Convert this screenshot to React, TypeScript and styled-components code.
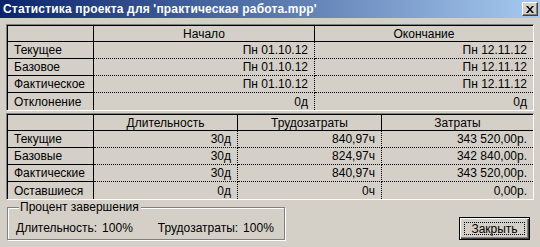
import React from "react";
import styled, { createGlobalStyle } from "styled-components";

const Global = createGlobalStyle`
  html, body { margin: 0; padding: 0; background: #d4d0c8; }
  body { font-family: "Liberation Sans", Arial, sans-serif; font-size: 12px; color: #000; }
  * { box-sizing: border-box; }
`;

const Window = styled.div`
  width: 540px;
  height: 247px;
  display: flex;
  flex-direction: column;
  background: #d4d0c8;
  overflow: hidden;
`;

const TitleBar = styled.div`
  height: 18px;
  flex: none;
  display: flex;
  align-items: center;
  justify-content: space-between;
  padding: 0 2px 0 3px;
  background: linear-gradient(to right, #0a246a, #a6caf0);
`;

const TitleText = styled.span`
  color: #fff;
  font-weight: bold;
  font-size: 12px;
  white-space: nowrap;
  letter-spacing: 0.17px;
`;

const CloseButton = styled.div`
  width: 16px;
  height: 14px;
  background: #d4d0c8;
  border: 1px solid;
  border-color: #fff #404040 #404040 #fff;
  box-shadow: inset -1px -1px 0 #808080;
  display: flex;
  align-items: center;
  justify-content: center;
`;

const Body = styled.div`
  flex: 1;
  display: flex;
  flex-direction: column;
  padding: 6px 6px 7px 6px;
`;

const Frame = styled.div<{ $mt?: number }>`
  border: 1px solid;
  border-color: #808080 #fff #fff #808080;
  margin-top: ${(p) => p.$mt ?? 0}px;
`;

const Grid = styled.div<{ $cols: string }>`
  display: grid;
  grid-template-columns: ${(p) => p.$cols};
  grid-template-rows: 16px;
  grid-auto-rows: 17px;
  border-top: 1px solid #000;
  border-left: 1px solid #000;
`;

type Kind = "head" | "label" | "data";

const Cell = styled.div<{ $kind: Kind; $lastCol?: boolean; $lastRow?: boolean }>`
  display: flex;
  align-items: center;
  white-space: nowrap;
  overflow: hidden;
  justify-content: ${(p) => (p.$kind === "head" ? "center" : p.$kind === "label" ? "flex-start" : "flex-end")};
  padding: ${(p) => (p.$kind === "label" ? "0 0 0 6px" : p.$kind === "data" ? "0 6px 0 0" : "0")};
  border-right: ${(p) =>
    p.$lastCol ? "none" : p.$kind === "data" ? "1px dotted #000" : "1px solid #000"};
  border-bottom: ${(p) =>
    p.$lastRow ? "none" : p.$kind === "data" ? "1px dotted #000" : "1px solid #000"};
`;

const BottomRow = styled.div`
  margin-top: auto;
  display: flex;
  justify-content: space-between;
  align-items: flex-end;
  padding: 0 4px 0 1px;
`;

const Group = styled.fieldset`
  margin: 0;
  width: 278px;
  height: 40px;
  padding: 2px 0 0 8px;
  border: 1px solid #808080;
  box-shadow: inset 1px 1px 0 #fff, 1px 1px 0 #fff;
  display: flex;
  align-items: center;
`;

const Legend = styled.legend`
  padding: 0 2px 0 1px;
  margin-left: 3px;
  background: #d4d0c8;
  font-size: 12px;
  line-height: 14px;
`;

const Pair = styled.div<{ $gap: number; $ml?: number }>`
  display: flex;
  gap: ${(p) => p.$gap}px;
  margin-left: ${(p) => p.$ml ?? 0}px;
  white-space: nowrap;
`;

const Button = styled.button`
  width: 71px;
  height: 23px;
  padding: 0;
  margin-bottom: 0;
  font-family: inherit;
  font-size: 12px;
  color: #000;
  background: #d4d0c8;
  border: 1px solid #000;
  box-shadow: inset 1px 1px 0 #fff, inset -1px -1px 0 #404040, inset -2px -2px 0 #808080;
  position: relative;
  display: flex;
  align-items: center;
  justify-content: center;
`;

const Focus = styled.span`
  position: absolute;
  inset: 4px;
  border: 1px dotted #000;
  pointer-events: none;
`;

type Row = { label: string; values: string[] };

function StatTable({ cols, heads, rows, mt }: { cols: string; heads: string[]; rows: Row[]; mt?: number }) {
  const n = heads.length;
  return (
    <Frame $mt={mt}>
      <Grid $cols={cols}>
        <Cell $kind="head" />
        {heads.map((h, i) => (
          <Cell key={h} $kind="head" $lastCol={i === n - 1}>
            {h}
          </Cell>
        ))}
        {rows.map((r, ri) => (
          <React.Fragment key={r.label}>
            <Cell $kind="label" $lastRow={ri === rows.length - 1}>
              {r.label}
            </Cell>
            {r.values.map((v, vi) => (
              <Cell key={vi} $kind="data" $lastCol={vi === n - 1} $lastRow={ri === rows.length - 1}>
                {v}
              </Cell>
            ))}
          </React.Fragment>
        ))}
      </Grid>
    </Frame>
  );
}

export default function App() {
  return (
    <Window>
      <Global />
      <TitleBar>
        <TitleText>Статистика проекта для 'практическая работа.mpp'</TitleText>
        <CloseButton>
          <svg width="8" height="7" viewBox="0 0 8 7">
            <path d="M0 0h2l2 2.5L6 0h2L5 3.5 8 7H6L4 4.5 2 7H0l3-3.5z" fill="#000" />
          </svg>
        </CloseButton>
      </TitleBar>
      <Body>
        <StatTable
          cols="86px 221px 218px"
          heads={["Начало", "Окончание"]}
          rows={[
            { label: "Текущее", values: ["Пн 01.10.12", "Пн 12.11.12"] },
            { label: "Базовое", values: ["Пн 01.10.12", "Пн 12.11.12"] },
            { label: "Фактическое", values: ["Пн 01.10.12", "Пн 12.11.12"] },
            { label: "Отклонение", values: ["0д", "0д"] },
          ]}
        />
        <StatTable
          mt={2}
          cols="86px 144px 144px 151px"
          heads={["Длительность", "Трудозатраты", "Затраты"]}
          rows={[
            { label: "Текущие", values: ["30д", "840,97ч", "343 520,00р."] },
            { label: "Базовые", values: ["30д", "824,97ч", "342 840,00р."] },
            { label: "Фактические", values: ["30д", "840,97ч", "343 520,00р."] },
            { label: "Оставшиеся", values: ["0д", "0ч", "0,00р."] },
          ]}
        />
        <BottomRow>
          <Group>
            <Legend>Процент завершения</Legend>
            <Pair $gap={5}>
              <span>Длительность:</span>
              <span>100%</span>
            </Pair>
            <Pair $gap={5} $ml={25}>
              <span>Трудозатраты:</span>
              <span>100%</span>
            </Pair>
          </Group>
          <Button>
            <Focus />
            Закрыть
          </Button>
        </BottomRow>
      </Body>
    </Window>
  );
}
